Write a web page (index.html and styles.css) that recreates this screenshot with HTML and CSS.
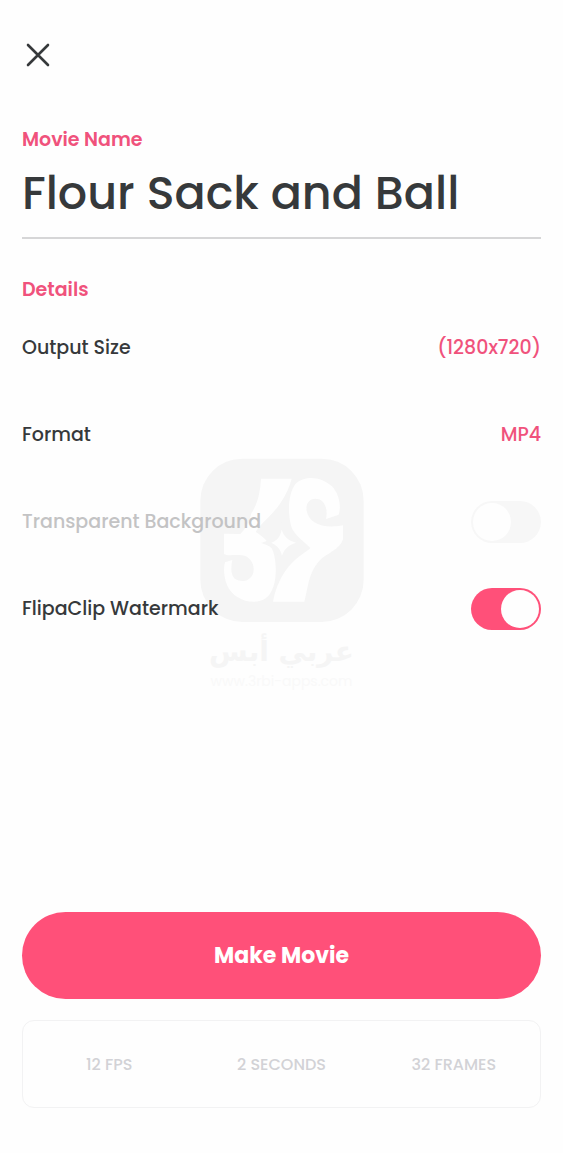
FILE: index.html
```html
<!DOCTYPE html>
<html lang="en">
<head>
<meta charset="utf-8">
<meta name="viewport" content="width=device-width, initial-scale=1">
<title>Make Movie</title>
<link rel="stylesheet" href="styles.css">
</head>
<body>
<main class="screen">
  <header class="topbar">
    <button class="close" type="button" aria-label="Close">
      <svg viewBox="0 0 24 24" width="24" height="24"><path d="M2 2L22 22M22 2L2 22"/></svg>
    </button>
  </header>

  <form class="form">
    <label class="heading" for="name">Movie Name</label>
    <input class="name" id="name" type="text" value="Flour Sack and Ball">

    <section class="details">
      <h2 class="heading">Details</h2>
      <div class="row"><span>Output Size</span><button class="value" type="button">(1280x720)</button></div>
      <div class="row"><span>Format</span><button class="value" type="button">MP4</button></div>
      <div class="row row-off"><label for="transparent">Transparent Background</label><input class="switch" id="transparent" type="checkbox" disabled></div>
      <div class="row"><label for="watermark">FlipaClip Watermark</label><input class="switch" id="watermark" type="checkbox" checked></div>

      <div class="stamp">
        <svg class="stamp-logo" viewBox="29 24 492 492">
          <rect class="tile" x="30" y="26" width="490" height="490" rx="126"/>
          <path class="glyph" d="M212 86H304C292 132 264 174 232 204C216 220 204 232 196 246C222 262 241 282 249 306C263 354 258 421 226 445C191 469 128 450 110 405C100 379 99 354 104 337L126 330C121 352 121 378 136 388C154 398 179 394 188 371C196 347 181 319 155 316C132 313 111 319 101 312V251L150 252C165 238 178 215 183 190C202 162 210 125 212 86Z"/>
          <path class="glyph" d="M342 455H248C255 421 266 390 285 363C309 328 344 308 360 295C344 274 312 258 303 230C291 188 293 127 318 99C350 72 398 84 425 109C448 134 453 171 445 194L407 207C413 181 405 155 386 148C363 140 345 156 349 182C355 218 396 238 458 226V268C448 301 410 307 384 336C354 369 352 420 342 455Z"/>
          <path class="gap" d="M276 207C283 247 301 267 338 279C301 290 283 309 274 349C267 311 249 289 212 279C249 269 268 246 276 207Z"/>
          <path class="glyph" d="M274 239C280 258 292 271 317 278C293 286 281 298 275 317C270 298 262 287 243 278C263 270 270 258 274 239Z"/>
        </svg>
        <p class="stamp-name" lang="ar" dir="rtl">عربي أبس</p>
        <p class="stamp-site">www.3rbi-apps.com</p>
      </div>
    </section>

    <footer class="footer">
      <button class="make" type="submit">Make Movie</button>
      <ul class="stats">
        <li>12 FPS</li>
        <li>2 SECONDS</li>
        <li>32 FRAMES</li>
      </ul>
    </footer>
  </form>
</main>
</body>
</html>
```

FILE: styles.css
```css
* { box-sizing: border-box; }

body {
  margin: 0;
  background: #fefefe;
  color: #36393b;
  font-family: Poppins, Inter, "Noto Sans", sans-serif;
}

button, input { font: inherit; color: inherit; }

button {
  border: 0;
  background: none;
  cursor: pointer;
}

.screen {
  display: flex;
  flex-direction: column;
  min-height: 100vh;
  padding: 33px 22px 45px;
}

.topbar {
  display: flex;
  margin: 0 -6px 49px;
}

.close {
  display: grid;
  place-items: center;
  width: 44px;
  height: 44px;
  padding: 0;
}

.close svg {
  fill: none;
  stroke: #36393b;
  stroke-width: 2.6;
  stroke-linecap: round;
}

.form {
  display: flex;
  flex: 1;
  flex-direction: column;
}

.heading {
  margin: 0;
  color: #f0527c;
  font-size: 19px;
  font-weight: 600;
  line-height: 28px;
}

.name {
  width: 100%;
  height: 85px;
  padding: 0 0 5px;
  border: 0;
  border-bottom: 2px solid #d6d6d7;
  border-radius: 0;
  outline: 0;
  background: none;
  font-size: 46px;
  font-weight: 500;
}

.details {
  position: relative;
  margin-top: 37px;
}

.row {
  display: flex;
  align-items: center;
  justify-content: space-between;
  height: 87px;
  font-size: 19px;
  font-weight: 500;
}

.row-off { color: #c3c3c4; }

.value {
  padding: 0;
  color: #f0527c;
}

.switch {
  appearance: none;
  display: flex;
  align-items: center;
  width: 70px;
  height: 42px;
  margin: 0;
  padding: 0 2px;
  border-radius: 21px;
  background: #f7f7f7;
}

.switch::before {
  content: "";
  width: 38px;
  height: 38px;
  border-radius: 50%;
  background: #fefefe;
}

.switch:checked {
  justify-content: flex-end;
  background: #ff5079;
}

/* Faint site stamp behind the detail rows */
.stamp {
  position: absolute;
  z-index: -1;
  top: 182px;
  left: 50%;
  width: 164px;
  transform: translateX(-50%);
  color: #f5f5f5;
  text-align: center;
  white-space: nowrap;
}

.stamp-logo {
  display: block;
  width: 100%;
}

.tile, .gap { fill: #f5f5f5; }
.glyph { fill: #fefefe; }

.stamp-name {
  margin: 8px 0 0;
  font-family: "DejaVu Sans", sans-serif;
  font-size: 28px;
  font-weight: 700;
  line-height: 44px;
}

.stamp-site {
  margin: 0;
  color: #f9f9f9;
  font-size: 14px;
  line-height: 14px;
}

.footer {
  margin-top: auto;
}

.make {
  display: block;
  width: 100%;
  height: 87px;
  border-radius: 44px;
  background: #ff5079;
  color: #fff;
  font-size: 22px;
  font-weight: 700;
}

.stats {
  display: grid;
  grid-template-columns: repeat(3, 1fr);
  align-items: center;
  height: 88px;
  margin: 21px 0 0;
  padding: 0;
  border: 1px solid #f2f2f3;
  border-radius: 12px;
  list-style: none;
  color: #d2d2d6;
  font-size: 16px;
  font-weight: 500;
  text-align: center;
}
```
